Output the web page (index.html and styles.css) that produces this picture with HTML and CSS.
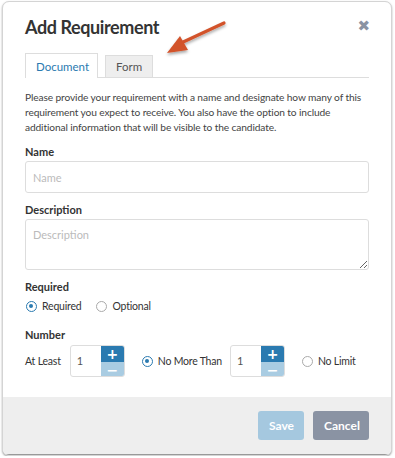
FILE: index.html
```html
<!DOCTYPE html>
<html lang="en">
<head>
    <meta charset="UTF-8">
    <title>Add Requirement</title>
    <link rel="stylesheet" href="styles.css">
</head>
<body>
    <div class="modal">
        <div class="modal-body">
            <div class="modal-header">
                <h1>Add Requirement</h1>
                <span class="close">&#x2716;</span>
            </div>

            <div class="tabs">
                <div class="tab active">Document</div>
                <div class="tab">Form</div>
            </div>

            <p class="intro">Please provide your requirement with a name and designate how many of this requirement you expect to receive. You also have the option to include additional information that will be visible to the candidate.</p>

            <label class="field-label">Name</label>
            <input type="text" class="text-input" placeholder="Name">

            <label class="field-label">Description</label>
            <textarea class="text-area" placeholder="Description"></textarea>

            <label class="field-label">Required</label>
            <div class="radio-row">
                <span class="radio checked"></span><span class="radio-text">Required</span>
                <span class="radio"></span><span class="radio-text">Optional</span>
            </div>

            <label class="field-label number-label">Number</label>
            <div class="number-row">
                <span class="row-text">At Least</span>
                <div class="spinner">
                    <span class="spin-value">1</span>
                    <div class="spin-buttons">
                        <span class="spin-up">+</span>
                        <span class="spin-down">&minus;</span>
                    </div>
                </div>
                <span class="radio checked"></span><span class="radio-text">No More Than</span>
                <div class="spinner">
                    <span class="spin-value">1</span>
                    <div class="spin-buttons">
                        <span class="spin-up">+</span>
                        <span class="spin-down">&minus;</span>
                    </div>
                </div>
                <span class="radio"></span><span class="radio-text">No Limit</span>
            </div>
        </div>

        <div class="modal-footer">
            <button class="btn btn-save">Save</button>
            <button class="btn btn-cancel">Cancel</button>
        </div>

        <!-- callout arrow pointing at the Form tab -->
        <svg class="callout" width="80" height="50" viewBox="0 0 80 50">
            <defs>
                <filter id="shadow" x="-20%" y="-20%" width="140%" height="160%">
                    <feDropShadow dx="0" dy="2" stdDeviation="1.5" flood-color="#000" flood-opacity="0.35"/>
                </filter>
            </defs>
            <g filter="url(#shadow)">
                <line x1="71" y1="11" x2="28" y2="31" stroke="#d2532b" stroke-width="3.2" stroke-linecap="round"/>
                <polygon points="14,41 27,24 35,38" fill="#d2532b"/>
            </g>
        </svg>
    </div>
</body>
</html>
```

FILE: styles.css
```css
* {
    margin: 0;
    padding: 0;
    box-sizing: border-box;
}

body {
    background: #fff;
    font-family: 'Lato', 'Open Sans', sans-serif;
    color: #333;
}

.modal {
    position: relative;
    margin: 1px 3px 0 2px;
    height: 455px;
    border: 1px solid #d4d4d4;
    border-radius: 7px;
    box-shadow: 0 1px 2px rgba(0, 0, 0, 0.35);
    background: #fff;
    overflow: hidden;
    display: flex;
    flex-direction: column;
}

.modal-body {
    flex: 1;
    padding: 0 22px 0 22px;
}

.modal-header {
    display: flex;
    justify-content: space-between;
    align-items: flex-start;
    padding-top: 14px;
}

h1 {
    font-family: 'Lato', sans-serif;
    font-size: 18px;
    font-weight: 700;
    color: #333;
    letter-spacing: -0.4px;
}

.close {
    margin-top: 1px;
    margin-right: -1px;
    color: #8a93a3;
    font-size: 15px;
    font-family: 'DejaVu Sans', sans-serif;
}

.tabs {
    display: flex;
    align-items: flex-end;
    gap: 7px;
    margin-top: 15px;
    border-bottom: 1px solid #ddd;
    height: 25px;
}

.tab {
    font-size: 11.5px;
    color: #555;
    border: 1px solid #ddd;
    border-bottom: none;
    padding: 0 10px;
    height: 22px;
    line-height: 21px;
    background: #eee;
}

.tab.active {
    background: #fff;
    color: #2a7ab0;
    height: 25px;
    line-height: 26px;
    margin-bottom: -1px;
    width: 73px;
}

.intro {
    margin-top: 12px;
    font-size: 10.2px;
    letter-spacing: -0.12px;
    line-height: 15px;
    color: #444;
}

.field-label {
    display: block;
    font-size: 11px;
    font-weight: 700;
    color: #333;
    margin-top: 10px;
    margin-bottom: 3px;
}

.text-input,
.text-area {
    display: block;
    width: 100%;
    border: 1px solid #ddd;
    border-radius: 3px;
    font-family: 'Lato', sans-serif;
    font-size: 11px;
    padding: 0 7px;
    outline: none;
}

.text-input {
    height: 32px;
}

.text-area {
    height: 51px;
    padding-top: 8px;
    resize: vertical;
}

::placeholder {
    color: #bbb;
}

.radio-row,
.number-row {
    display: flex;
    align-items: center;
    font-size: 10.5px;
    letter-spacing: -0.2px;
    color: #333;
    white-space: nowrap;
}

.radio-row {
    margin-top: 7px;
}

.radio {
    flex-shrink: 0;
    width: 11px;
    height: 11px;
    border: 1.5px solid #aaa;
    border-radius: 50%;
    position: relative;
    margin-left: 1px;
    margin-right: 5px;
}

.radio.checked {
    border-color: #2a7ab0;
}

.radio.checked::after {
    content: '';
    position: absolute;
    left: 2px;
    top: 2px;
    width: 4px;
    height: 4px;
    border-radius: 50%;
    background: #2a7ab0;
}

.radio-text {
    margin-right: 14px;
}

.number-label {
    margin-top: 16px;
}

.number-row {
    margin-top: 4px;
}

.number-row > * {
    flex-shrink: 0;
}

.number-row .radio-text {
    margin-right: 8px;
}

.row-text {
    margin-right: 9px;
}

.spinner {
    display: flex;
    width: 55px;
    height: 32px;
    border: 1px solid #ddd;
    border-radius: 3px;
    overflow: hidden;
    margin-right: 16px;
}

.spin-value {
    flex: 1;
    padding-left: 6px;
    line-height: 30px;
    font-size: 11px;
    color: #555;
}

.spin-buttons {
    width: 23px;
    display: flex;
    flex-direction: column;
}

.spin-up,
.spin-down {
    flex: 1;
    display: flex;
    align-items: center;
    justify-content: center;
    color: #fff;
    font-weight: 700;
    font-size: 14px;
    font-family: 'DejaVu Sans', sans-serif;
}

.spin-up {
    background: #2a7ab0;
}

.spin-down {
    background: #a9cce2;
}

.modal-footer {
    height: 58px;
    background: #eee;
    border-bottom: 1px solid #999;
    display: flex;
    justify-content: flex-end;
    align-items: center;
    gap: 9px;
    padding-right: 22px;
}

.btn {
    height: 29px;
    border: none;
    border-radius: 3px;
    color: #fff;
    font-family: 'Lato', sans-serif;
    font-size: 12px;
    font-weight: 700;
    padding: 0 11px;
}

.btn-save {
    width: 46px;
    background: #a5c8df;
}

.btn-cancel {
    width: 56px;
    background: #8a93a3;
}

.callout {
    position: absolute;
    left: 150px;
    top: 10px;
}
```
